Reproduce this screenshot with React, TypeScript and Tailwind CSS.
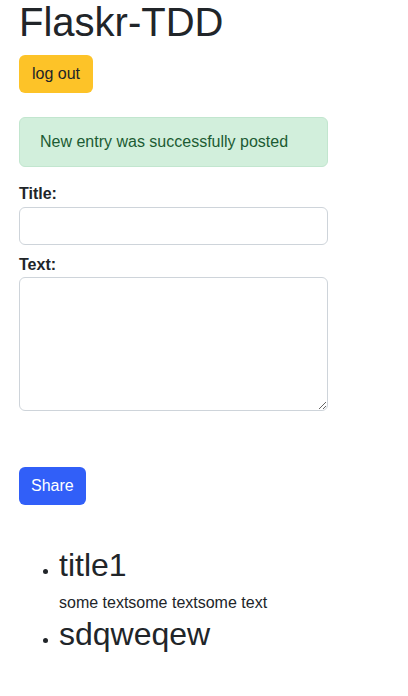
export default function App() {
  return (
    <div className="min-h-[696px] bg-white text-[#212529] font-['Liberation_Sans',Arial,sans-serif]">
      <div className="ml-[19px] w-[309px]">
        <h1 className="text-[40px] leading-[48px] -mt-[2px]">Flaskr-TDD</h1>
        <button className="mt-[9px] h-[38px] px-[13px] rounded-md bg-[#fdc328] text-base text-[#212529]">
          log out
        </button>

        <div className="mt-6 h-[50px] flex items-center px-5 rounded-md border border-[#c2e6cf] bg-[#d2efdc] text-[#1c5b33]">
          New entry was successfully posted
        </div>

        <form className="mt-[15px]" onSubmit={(e) => e.preventDefault()}>
          <label className="block font-bold leading-6">Title:</label>
          <input
            type="text"
            className="block w-full h-[38px] mt-px rounded-md border border-[#ced4da] bg-white px-3"
          />
          <label className="block font-bold leading-6 mt-2">Text:</label>
          <textarea className="block w-full h-[134px] rounded-md border border-[#ced4da] bg-white px-3 py-1.5" />
          <button
            type="submit"
            className="mt-[56px] h-[38px] px-3 rounded-md bg-[#315ff8] text-white text-base"
          >
            Share
          </button>
        </form>

        <ul className="mt-[41px] pl-10 list-disc">
          <li>
            <h2 className="text-[32px] leading-[38px]">title1</h2>
            <p className="mt-[7px] leading-6">some textsome textsome text</p>
          </li>
          <li>
            <h2 className="text-[32px] leading-[38px]">sdqweqew</h2>
          </li>
        </ul>
      </div>
    </div>
  );
}
